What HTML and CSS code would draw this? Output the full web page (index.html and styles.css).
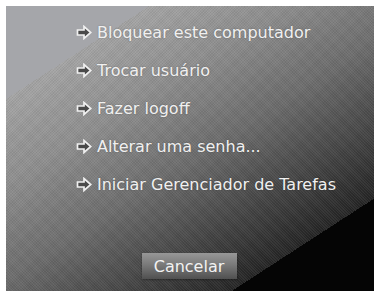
FILE: index.html
```html
<!DOCTYPE html>
<html>
<head>
<meta charset="utf-8">
<link rel="stylesheet" href="styles.css">
</head>
<body>
<div class="panel">
  <ul class="menu">
    <li class="item"><svg class="arrow" viewBox="0 0 16 15" width="16" height="15"><path d="M1.5 5H8V1.5L14.8 7.5L8 13.5V10H1.5Z"/></svg><span>Bloquear este computador</span></li>
    <li class="item"><svg class="arrow" viewBox="0 0 16 15" width="16" height="15"><path d="M1.5 5H8V1.5L14.8 7.5L8 13.5V10H1.5Z"/></svg><span>Trocar usuário</span></li>
    <li class="item"><svg class="arrow" viewBox="0 0 16 15" width="16" height="15"><path d="M1.5 5H8V1.5L14.8 7.5L8 13.5V10H1.5Z"/></svg><span>Fazer logoff</span></li>
    <li class="item"><svg class="arrow" viewBox="0 0 16 15" width="16" height="15"><path d="M1.5 5H8V1.5L14.8 7.5L8 13.5V10H1.5Z"/></svg><span>Alterar uma senha...</span></li>
    <li class="item"><svg class="arrow" viewBox="0 0 16 15" width="16" height="15"><path d="M1.5 5H8V1.5L14.8 7.5L8 13.5V10H1.5Z"/></svg><span>Iniciar Gerenciador de Tarefas</span></li>
  </ul>
  <div class="actions"><button class="cancel">Cancelar</button></div>
</div>
</body>
</html>
```

FILE: styles.css
```css
html, body {
  margin: 0;
  padding: 0;
  background: #ffffff;
}
body {
  padding: 6px;
  font-family: "DejaVu Sans", Verdana, sans-serif;
}
.panel {
  width: 368px;
  height: 285px;
  box-sizing: border-box;
  display: flex;
  flex-direction: column;
  padding: 7px 0 12px 0;
  background:
    linear-gradient(147deg, #a5a6aa 0, #a5a6aa 78px, rgba(0,0,0,0) 78px),
    linear-gradient(147deg, rgba(0,0,0,0) 362px, #050505 362px),
    repeating-linear-gradient(45deg, rgba(255,255,255,0.06) 0 1px, rgba(0,0,0,0) 1px 2px),
    repeating-linear-gradient(-45deg, rgba(0,0,0,0.06) 0 1px, rgba(0,0,0,0) 1px 2px),
    linear-gradient(147deg, #a4a4a4 78px, #8e8e8e 150px, #6c6c6c 230px, #404040 310px, #242424 362px);
}
.menu {
  list-style: none;
  margin: 0;
  padding: 0 0 0 70px;
}
.item {
  display: flex;
  align-items: center;
  height: 38px;
  font-size: 16px;
  color: #f0f0f0;
  text-shadow: 0 0 2px rgba(0,0,0,0.25);
}
.arrow {
  flex: none;
  margin-right: 5px;
}
.arrow path {
  fill: #4a4a4a;
  stroke: #f0f0f0;
  stroke-width: 1.7;
  stroke-linejoin: miter;
}
.actions {
  margin-top: auto;
  display: flex;
  justify-content: center;
  padding-right: 2px;
}
.cancel {
  width: 95px;
  height: 26px;
  border: none;
  padding: 0;
  font-family: "DejaVu Sans", Verdana, sans-serif;
  font-size: 16px;
  color: #f2f2f2;
  background: linear-gradient(180deg, #979797 0%, #7a7a7a 45%, #505050 100%);
  box-shadow: 0 1px 2px rgba(0,0,0,0.35);
}
```
